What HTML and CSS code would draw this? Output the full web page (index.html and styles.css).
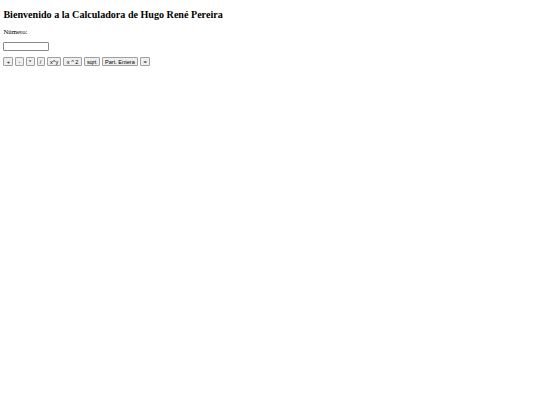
FILE: index.html
```html
<!DOCTYPE html>
<html lang="es">
<head>
<meta charset="utf-8">
<title>Calculadora</title>
<link rel="stylesheet" href="styles.css">
</head>
<body class="page">
<h2 class="title">Bienvenido a la Calculadora de Hugo René Pereira</h2>
<p class="label">Número:</p>
<input class="num" type="text">
<div class="ops">
<button class="op">+</button>
<button class="op">-</button>
<button class="op">*</button>
<button class="op">/</button>
<button class="op">x^y</button>
<button class="op">x ^ 2</button>
<button class="op">sqrt</button>
<button class="op">Part. Entera</button>
<button class="op">=</button>
</div>
</body>
</html>
```
FILE: styles.css
```css
.page {
  margin: 3.4px;
  font-family: "Liberation Serif", "Times New Roman", serif;
  font-size: 6.75px;
  color: #000;
  background: #fff;
}
.title {
  font-size: 10.1px;
  font-weight: bold;
  margin: 5.4px 0 8.4px;
}
.label {
  margin: 6.75px 0;
}
.num {
  display: block;
  box-sizing: border-box;
  width: 46px;
  height: 9px;
  padding: 0 1px;
  border: 1px solid #8a8a8a;
  border-radius: 1px;
  font-size: 5.6px;
  margin: 0;
}
.ops {
  display: flex;
  gap: 2px;
  margin-top: 6.5px;
}
.op {
  font-family: "Liberation Sans", Arial, sans-serif;
  font-size: 5.6px;
  height: 8.5px;
  line-height: 6px;
  padding: 0 2.3px;
  border: 1px solid #a0a0a0;
  border-radius: 1px;
  background: #efefef;
  color: #000;
  margin: 0;
}
```
